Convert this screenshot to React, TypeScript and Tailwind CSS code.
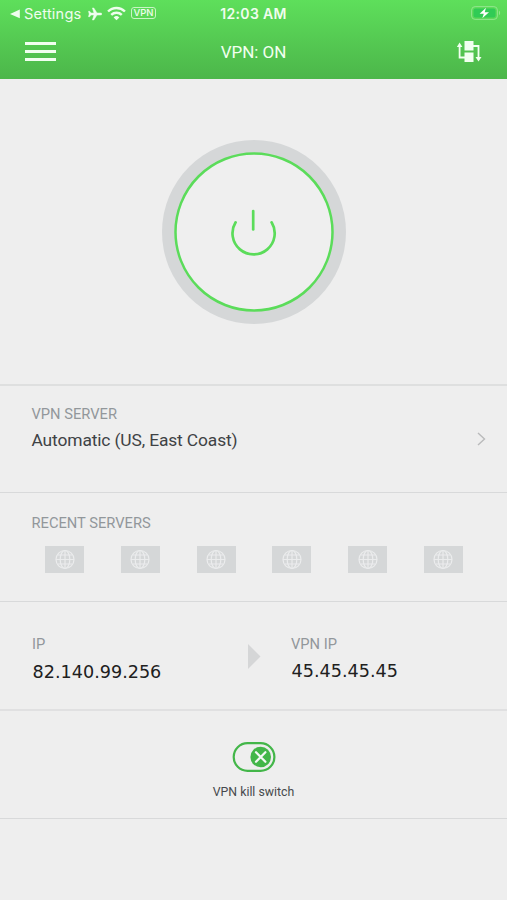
import type { ReactNode } from "react";

const recentServers = [1, 2, 3, 4, 5, 6];

function StatusBar() {
    return (
        <div className="relative flex h-7 items-center pl-[10px] pr-[6px] text-[#effdee]">
            <svg width="10" height="10" viewBox="0 0 10 10" className="shrink-0" fill="currentColor">
                <path d="M9.8 .6v8.6L0 4.9z" />
            </svg>
            <span className="ml-[4px] w-[58px] whitespace-nowrap font-['Inter',sans-serif] text-[14.6px] leading-[28px] tracking-[0.2px]">
                Settings
            </span>
            <svg width="14" height="14" viewBox="0 0 14 14" className="ml-[6px] shrink-0" fill="currentColor" stroke="currentColor" strokeWidth=".5">
                <path d="M14 7c0 .6-.9 1-2 1H9L5.800 13H4.400L6 8H3L1.700 9.700H.5L1.200 7 .5 4.300h1.200L3 6h3L4.400 1h1.400L9 6h3c1.100 0 2 .4 2 1z" />
            </svg>
            <svg width="19" height="15" viewBox="0 0 18 14" className="ml-[5px] -translate-y-px shrink-0" fill="none" stroke="currentColor" strokeWidth="2.300">
                <path d="M1 5.100a11.400 11.400 0 0 1 16 0" />
                <path d="M4 8.300a7.200 7.200 0 0 1 10 0" />
                <path d="M9 13.500l-2.700-2.800a4 4 0 0 1 5.400 0z" fill="currentColor" stroke="none" />
            </svg>
            <span className="ml-[5px] flex h-[12px] w-[25px] -translate-y-px shrink-0 items-center justify-center rounded-[3px] border border-[#c8f4c5] font-['Inter',sans-serif] text-[9.5px] font-medium leading-none">
                VPN
            </span>
            <span className="absolute inset-x-0 top-0 text-center font-['Inter',sans-serif] text-[14px] font-semibold leading-[28px] tracking-[0.35px]">
                12:03 AM
            </span>
            <svg width="30" height="14" viewBox="0 0 30 14" className="ml-auto -translate-y-px shrink-0">
                <rect x=".6" y=".6" width="25.800" height="12.800" rx="3.500" fill="none" stroke="#91e58e" />
                <rect x="2.500" y="2.500" width="22" height="9" rx="2" fill="#30cb55" />
                <path d="M28 4.800c1.500.6 1.500 3.800 0 4.400z" fill="#91e58e" />
                <path d="M15 1.800L8.600 7.800h4.200L11.300 12.200 18 6.200h-4.300z" fill="#fff" />
            </svg>
        </div>
    )
}

function Header() {
    return (
        <header className="h-[79px] bg-linear-to-b from-[#5edf5b] to-[#4cb64a]">
            <StatusBar />
            <div className="grid h-[47px] grid-cols-3 items-center pl-[25px] pr-[25px] text-[#f1fff0]">
                <button aria-label="Menu" className="flex w-[31px] flex-col gap-[5px]">
                    <span className="h-[3px] bg-current" />
                    <span className="h-[3px] bg-current" />
                    <span className="h-[3px] bg-current" />
                </button>
                <h1 className="pt-[2px] text-center text-[17px] tracking-[-0.05px]">VPN: ON</h1>
                <button aria-label="Switch server" className="justify-self-end">
                    <svg width="25" height="22" viewBox="0 0 25 22" fill="currentColor">
                        <rect x="7.500" y="0" width="9" height="9.500" />
                        <rect x="7.500" y="11.500" width="9" height="9.500" />
                        <path d="M8 16.500H2.600V5M16 5h5.500v13" fill="none" stroke="currentColor" strokeWidth="1.800" />
                        <path d="M-.2 6L2.600 1.500 5.400 6zM18.500 16h6l-3 4.500z" />
                    </svg>
                </button>
            </div>
        </header>
    )
}

function Label({ children }: { children: ReactNode }) {
    return <div className="text-[14.7px] leading-[18px] text-[#92979b]">{children}</div>
}

function PowerButton() {
    return (
        <button aria-label="Toggle VPN" className="mt-[61px] size-[184px]">
            <svg width="184" height="184" viewBox="0 0 184 184" fill="none">
                <circle cx="92" cy="92" r="92" fill="#d5d7d8" />
                <circle cx="92" cy="92" r="78.500" fill="#efefef" stroke="#5bdc5a" strokeWidth="2.500" />
                <g stroke="#5bdc5a" strokeWidth="2.700" strokeLinecap="round">
                    <path d="M91.200 71v18.500" />
                    <path d="M73.600 82.300a21.100 21.100 0 1 0 36 0" />
                </g>
            </svg>
        </button>
    )
}

function ServerTile() {
    return (
        <div className="flex h-[27px] w-[39px] items-center justify-center bg-[#d5d7d8]">
            <svg width="20" height="20" viewBox="0 0 20 20" className="-translate-y-[0.5px]" fill="none" stroke="#ebeced" strokeWidth="1.200">
                <circle cx="10" cy="10" r="9" />
                <ellipse cx="10" cy="10" rx="4.800" ry="9" />
                <path d="M10 1v18M1 10h18M2.800 5.500h14.400M2.800 14.500h14.400" />
            </svg>
        </div>
    )
}

export default function App() {
    return (
        <div className="h-[900px] w-[507px] overflow-hidden bg-[#eeeeee] font-['Roboto',sans-serif]">
            <Header />
            <main>
                <section className="flex h-[307px] justify-center border-b-2 border-[#dedfdf]">
                    <PowerButton />
                </section>

                <section className="flex h-[107px] items-start justify-between border-b border-[#d8d9da] pl-[31.5px] pr-[21px] pt-[19px]">
                    <div>
                        <Label>VPN SERVER</Label>
                        <div className="mt-[6px] text-[17.4px] leading-[22px] tracking-[-0.13px] text-[#3e4245]">
                            Automatic (US, East Coast)
                        </div>
                    </div>
                    <svg width="9" height="14" viewBox="0 0 9 14" className="mt-[27px]" fill="none" stroke="#b9babb" strokeWidth="1.400">
                        <path d="M1 1l6.500 6L1 13" />
                    </svg>
                </section>

                <section className="h-[109px] border-b border-[#d8d9da] pl-[31.5px] pr-[44px] pt-[21px]">
                    <Label>RECENT SERVERS</Label>
                    <div className="ml-[13.5px] mt-[14px] flex justify-between">
                        {recentServers.map((id) => (
                            <ServerTile key={id} />
                        ))}
                    </div>
                </section>

                <section className="flex h-[109px] border-b-2 border-[#e0e0e1] pl-[32px] pt-[33px]">
                    <div className="w-[216px]">
                        <Label>IP</Label>
                        <div className="mt-[8px] pl-[0.6px] font-['DejaVu_Sans',sans-serif] text-[17.6px] leading-[22px] text-[#202020]">
                            82.140.99.256
                        </div>
                    </div>
                    <svg width="13" height="25" viewBox="0 0 13 25" className="mt-[9px]" fill="#d5d6d7">
                        <path d="M0 0l12.500 12.500L0 25z" />
                    </svg>
                    <div className="ml-[30px]">
                        <Label>VPN IP</Label>
                        <div className="mt-[7px] pl-[0.6px] font-['DejaVu_Sans',sans-serif] text-[17.6px] leading-[22px] text-[#202020]">
                            45.45.45.45
                        </div>
                    </div>
                </section>

                <section className="flex h-[108px] flex-col items-center border-b border-[#d8d9da] pt-[31px]">
                    <button role="switch" aria-checked="true" aria-label="VPN kill switch">
                        <svg width="44" height="30" viewBox="0 0 44 30" fill="none">
                            <rect x="1.700" y="1.200" width="40.700" height="27.600" rx="13.800" stroke="#43b649" strokeWidth="2.200" />
                            <circle cx="28.700" cy="15" r="10.300" fill="#43b649" />
                            <path d="M24 10.300l9.400 9.400M33.400 10.300L24 19.700" stroke="#f4f8f4" strokeWidth="2.300" strokeLinecap="round" />
                        </svg>
                    </button>
                    <div className="mt-[12px] text-[12.3px] leading-[16px] text-[#46494c]">VPN kill switch</div>
                </section>
            </main>
        </div>
    )
}
